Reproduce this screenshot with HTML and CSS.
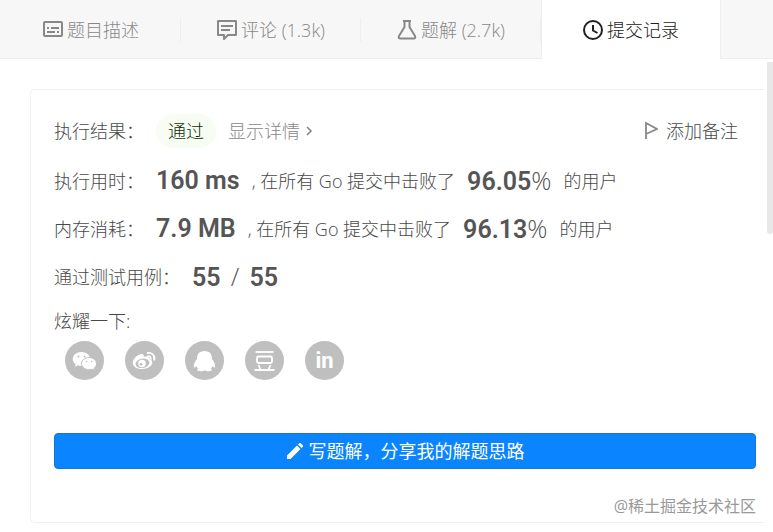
FILE: index.html
```html
<!DOCTYPE html>
<html lang="zh-CN">
<head>
    <meta charset="UTF-8">
    <meta name="viewport" content="width=device-width, initial-scale=1.0">
    <title>提交记录</title>
    <link rel="stylesheet" href="styles.css">
</head>
<body>
    <nav class="tabs">
        <a class="tab" href="#">
            <svg class="tab-icon" viewBox="0 0 20 20" fill="none" stroke="currentColor" stroke-width="2">
                <rect x="1" y="2" width="18" height="14" rx="1"/>
                <path d="M4 8h2M8 8h8M4 12h8M14 12h2"/>
            </svg>
            <span>题目描述</span>
        </a>
        <a class="tab" href="#">
            <svg class="tab-icon" viewBox="0 0 20 20" fill="none" stroke="currentColor" stroke-width="2">
                <path d="M1 1h18v14h-8l-4 4v-4H1z" stroke-linejoin="round"/>
                <path d="M4 6h12M4 10h9"/>
            </svg>
            <span>评论 (1.3k)</span>
        </a>
        <a class="tab" href="#">
            <svg class="tab-icon" viewBox="0 0 20 20" fill="none" stroke="currentColor" stroke-width="2">
                <path d="M6 1h8M7.5 1v6L2 16q-1 2.500 1.500 2.500h13Q19 18.500 18 16L12.500 7V1" stroke-linejoin="round"/>
            </svg>
            <span>题解 (2.7k)</span>
        </a>
        <a class="tab active" href="#">
            <svg class="tab-icon" viewBox="0 0 20 20" fill="none" stroke="currentColor" stroke-width="2">
                <circle cx="10" cy="10" r="9"/>
                <path d="M10 5v5.500l4.500 2.500"/>
            </svg>
            <span>提交记录</span>
        </a>
    </nav>

    <main class="result">
        <div class="row row-status">
            <span>执行结果：</span>
            <span class="badge">通过</span>
            <a class="detail" href="#">显示详情
                <svg class="chevron" viewBox="0 0 8 12" fill="none" stroke="currentColor" stroke-width="1.600">
                    <path d="M2 2l4 4-4 4"/>
                </svg>
            </a>
            <button class="note" type="button">
                <svg class="flag" viewBox="0 0 14 20" fill="none" stroke="currentColor" stroke-width="1.800">
                    <path d="M2 18V2l11 6L2 13"/>
                </svg>
                添加备注
            </button>
        </div>
        <div class="row">
            <span>执行用时：</span>
            <span class="num">160 ms</span>
            <span>, 在所有 Go 提交中击败了</span>
            <span class="num">96.05<span class="light">%</span></span>
            <span>的用户</span>
        </div>
        <div class="row">
            <span>内存消耗：</span>
            <span class="num">7.9 MB</span>
            <span>, 在所有 Go 提交中击败了</span>
            <span class="num">96.13<span class="light">%</span></span>
            <span>的用户</span>
        </div>
        <div class="row">
            <span>通过测试用例：</span>
            <span class="num">55 <span class="light slash">/</span> 55</span>
        </div>
        <div class="row row-share">炫耀一下:</div>
        <div class="share">
            <a class="share-link" href="#" aria-label="微信">
                <svg viewBox="0 0 39 39">
                    <path fill="#fff" d="M16.500 11c-5 0-8.700 3.100-8.700 7 0 2.200 1.100 4 2.800 5.300l-.6 2.400 2.900-1.500c1.100.400 2.300.600 3.600.600 4.900 0 8.700-3 8.700-6.900S21.400 11 16.500 11z"/>
                    <path fill="#fff" stroke="#bfbfbf" d="M24 16.500c4.300 0 7.500 2.800 7.500 6.200 0 1.900-1 3.500-2.500 4.600l.5 2.200-2.500-1.300c-1 .3-1.900.5-3 .5-4.300 0-7.500-2.700-7.500-6s3.200-6.200 7.500-6.200z"/>
                    <g fill="#bfbfbf">
                        <circle cx="13.500" cy="15.500" r="1"/><circle cx="19.500" cy="15.500" r="1"/>
                        <circle cx="21.500" cy="20.500" r=".8"/><circle cx="26.500" cy="20.500" r=".8"/>
                    </g>
                </svg>
            </a>
            <a class="share-link" href="#" aria-label="微博">
                <svg viewBox="0 0 39 39" fill="none" stroke="#fff">
                    <path fill="#fff" stroke="none" d="M15.500 13.200c2-.8 3.900 0 3.200 2.900 3-1.300 6.800-1.100 5.800 2.200 3.500.9 3.600 4.500 1.100 6.800-4 3.700-12 4-15.700.9-5.200-4.300.2-11.200 5.600-12.800z"/>
                    <ellipse cx="17.500" cy="22.300" rx="7" ry="4.700" fill="#bfbfbf" stroke="none" transform="rotate(-10 17.500 22.300)"/>
                    <circle cx="17" cy="22.500" r="3.800" fill="#fff" stroke="none"/>
                    <circle cx="16" cy="23.300" r="1.400" fill="#bfbfbf" stroke="none"/>
                    <path d="M22 12c5-1 8.500 2.600 7.200 7.500" stroke-width="1.800"/>
                    <path d="M22.500 15.200c2.400-.5 3.900 1.200 3.300 3.500" stroke-width="1.500"/>
                </svg>
            </a>
            <a class="share-link" href="#" aria-label="QQ">
                <svg viewBox="0 0 39 39">
                    <path fill="#fff" d="M19.500 10c-5.400 0-7.700 3.600-7.400 8-2 2.300-4 5.500-3 8.200.6.800 1.700-.2 2.400-1.200.3 1.200.9 2 1.700 2.700-1.500.6-1.400 2.100.7 2.400 2.300.3 4.600 0 5.600-.9 1 .9 3.300 1.200 5.600.9 2.100-.3 2.200-1.800.7-2.400.8-.7 1.400-1.500 1.700-2.700.7 1 1.800 2 2.400 1.200 1-2.700-1-5.900-3-8.200.3-4.400-2-8-7.400-8z"/>
                </svg>
            </a>
            <a class="share-link" href="#" aria-label="豆瓣">
                <svg viewBox="0 0 39 39" fill="none" stroke="#fff" stroke-width="1.800">
                    <path d="M10.500 11h18"/>
                    <rect x="12" y="15.500" width="15" height="6.500" rx="1.500"/>
                    <path d="M13.500 24l2 4.500M25.500 24l-2 4.500M9.500 29h20"/>
                </svg>
            </a>
            <a class="share-link" href="#" aria-label="LinkedIn">in</a>
        </div>
        <button class="write" type="button">
            <svg class="pencil" viewBox="0 0 18 18" fill="#fff">
                <path d="M1 17v-3.500L11 3.500 14.500 7 4.500 17zM12 2.500l1.300-1.300q.7-.6 1.400 0l2.100 2.100q.6.700 0 1.400L15.500 6z"/>
            </svg>
            写题解，分享我的解题思路
        </button>
    </main>

    <div class="scrollbar"></div>
    <div class="watermark">@稀土掘金技术社区</div>
</body>
</html>
```
FILE: styles.css
```css
* {
    box-sizing: border-box;
}

body {
    margin: 0;
    min-height: 100vh;
    position: relative;
    font-family: "Open Sans", "Noto Sans CJK SC", sans-serif;
    font-size: 18px;
    font-weight: 300;
    line-height: 24px;
    color: #484848;
    background-color: #fff;
}

a {
    color: inherit;
    text-decoration: none;
}

button {
    font: inherit;
    color: inherit;
    border: none;
    background: none;
    cursor: pointer;
}

.tabs {
    display: flex;
    height: 59px;
    padding-left: 1px;
    background-color: #f7f7f7;
    box-shadow: inset 0 -1px #eee;
}

.tab {
    display: flex;
    align-items: center;
    justify-content: center;
    gap: 4px;
    width: 180px;
    color: #888;
    background: linear-gradient(#eee, #eee) right center / 1px 24px no-repeat;
}

.tab.active {
    color: #212121;
    background: #fff;
    border-left: 1px solid #eee;
    border-right: 1px solid #eee;
}

.tab-icon {
    width: 20px;
    height: 20px;
}

.result {
    margin: 30px 9px 9px 30px;
    padding: 15px 8px 53px 23px;
    border: 1px solid #f0f0f0;
    border-right: none;
    border-radius: 5px 0 0 5px;
}

.row {
    display: flex;
    align-items: center;
    gap: 12px;
    height: 48px;
    white-space: nowrap;
}

.row-status {
    height: 52px;
}

.row-share {
    height: 40px;
}

.badge {
    padding: 5px 12px;
    border-radius: 17px;
    color: #102a08;
    background-color: #f8fdf3;
}

.detail {
    display: flex;
    align-items: center;
    gap: 5px;
    color: #888;
}

.chevron {
    width: 8px;
    height: 12px;
}

.note {
    display: flex;
    align-items: center;
    gap: 8px;
    margin-left: auto;
    padding: 0 18px 0 0;
}

.flag {
    width: 14px;
    height: 20px;
    color: #888;
}

.num {
    font-family: Roboto, sans-serif;
    font-size: 25px;
    font-weight: 600;
    color: #555;
}

.light {
    font-family: "Open Sans", sans-serif;
    font-weight: 300;
}

.slash {
    padding: 0 4px;
}

.share {
    display: flex;
    gap: 21px;
    padding-left: 11px;
}

.share-link {
    display: flex;
    align-items: center;
    justify-content: center;
    width: 39px;
    height: 39px;
    border-radius: 50%;
    font-family: Roboto, sans-serif;
    font-size: 22px;
    font-weight: 700;
    color: #fff;
    background-color: #bfbfbf;
}

.write {
    display: flex;
    align-items: center;
    justify-content: center;
    gap: 5px;
    width: 100%;
    height: 36px;
    margin-top: 53px;
    border: 1px solid #1b75d0;
    border-radius: 4px;
    font-weight: 400;
    color: #fff;
    background-color: #0a84ff;
}

.pencil {
    width: 18px;
    height: 18px;
}

.scrollbar {
    position: absolute;
    top: 62px;
    right: 0;
    width: 6px;
    height: 172px;
    border-radius: 0 0 3px 3px;
    background-color: #e8e8e8;
}

.watermark {
    position: absolute;
    right: 17px;
    bottom: 14px;
    font-size: 16px;
    font-weight: 400;
    color: #999;
}
```
